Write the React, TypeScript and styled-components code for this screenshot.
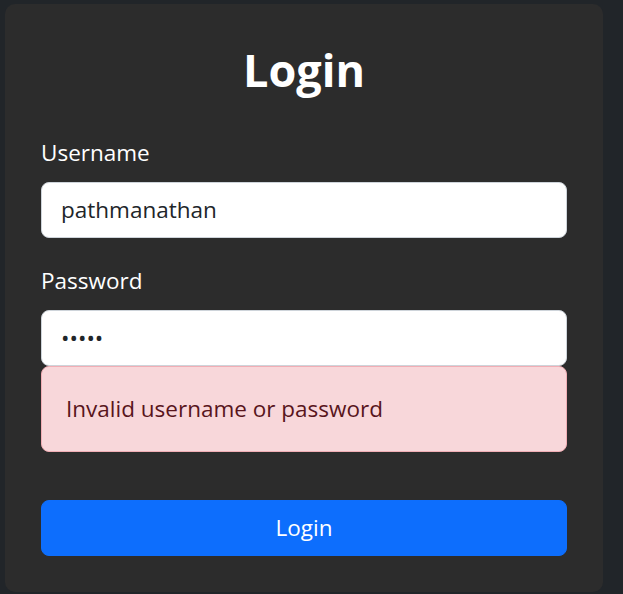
import React from "react";
import styled, { createGlobalStyle } from "styled-components";

const GlobalStyle = createGlobalStyle`
  body {
    margin: 0;
    background: #212529;
    font-family: "Open Sans", "Noto Sans", sans-serif;
    color: #fff;
  }
`;

export default function App() {
  return (
    <>
      <GlobalStyle />
      <Page>
        <Card>
          <Title>Login</Title>
          <Field>
            <Label htmlFor="username">Username</Label>
            <Input id="username" type="text" defaultValue="pathmanathan" />
          </Field>
          <Field>
            <Label htmlFor="password">Password</Label>
            <Input id="password" type="password" defaultValue="abcde" />
            <Alert>Invalid username or password</Alert>
          </Field>
          <SubmitButton type="button">Login</SubmitButton>
        </Card>
      </Page>
    </>
  );
}

const Page = styled.div`
  padding: 4px 20px 2px 5px;
`;

const Card = styled.form`
  width: 598px;
  box-sizing: border-box;
  padding: 37px 36px 36px;
  background: #2c2c2c;
  border-radius: 10px;
  display: flex;
  flex-direction: column;
`;

const Title = styled.h1`
  margin: 0 0 36px;
  font-size: 45px;
  line-height: 57.6px;
  font-weight: 700;
  text-align: center;
`;

const Field = styled.div`
  display: flex;
  flex-direction: column;
  margin-bottom: 25px;
`;

const Label = styled.label`
  font-size: 22.5px;
  line-height: 36px;
  margin-bottom: 11px;
`;

const Input = styled.input`
  box-sizing: border-box;
  height: 56px;
  padding: 0 19px;
  font-family: inherit;
  font-size: 22.5px;
  color: #212529;
  background: #fff;
  border: 1px solid #ced4da;
  border-radius: 8px;
  outline: none;
`;

const Alert = styled.div`
  box-sizing: border-box;
  height: 86px;
  padding: 0 24px;
  display: flex;
  align-items: center;
  font-size: 22.5px;
  line-height: 36px;
  color: #58151c;
  background: #f8d7da;
  border: 1px solid #f1aeb5;
  border-radius: 8px;
  margin-bottom: 23px;
`;

const SubmitButton = styled.button`
  height: 56px;
  font-family: inherit;
  font-size: 22.5px;
  color: #fff;
  background: #0d6efd;
  border: 1px solid #0d6efd;
  border-radius: 8px;
  cursor: pointer;
`;
